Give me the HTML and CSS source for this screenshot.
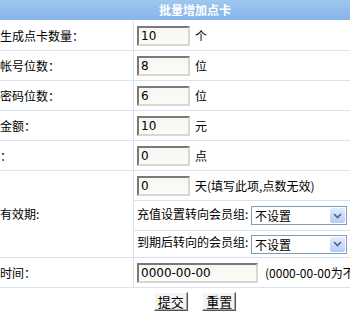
FILE: index.html
```html
<!DOCTYPE html>
<html lang="zh-CN">
<head>
    <meta charset="UTF-8">
    <title>批量增加点卡</title>
    <link rel="stylesheet" href="styles.css">
</head>
<body>

    <table class="form-table">
        <tr>
            <th colspan="2" class="title">批量增加点卡</th>
        </tr>
        <tr>
            <td class="label">生成点卡数量：</td>
            <td class="field"><input type="text" class="txt" value="10"><span class="unit">个</span></td>
        </tr>
        <tr>
            <td class="label">帐号位数：</td>
            <td class="field"><input type="text" class="txt" value="8"><span class="unit">位</span></td>
        </tr>
        <tr>
            <td class="label">密码位数：</td>
            <td class="field"><input type="text" class="txt" value="6"><span class="unit">位</span></td>
        </tr>
        <tr>
            <td class="label">金额：</td>
            <td class="field"><input type="text" class="txt" value="10"><span class="unit">元</span></td>
        </tr>
        <tr>
            <td class="label">：</td>
            <td class="field"><input type="text" class="txt" value="0"><span class="unit">点</span></td>
        </tr>
        <tr>
            <td class="label">有效期:</td>
            <td class="nested">
                <table class="inner">
                    <tr>
                        <td><input type="text" class="txt" value="0"><span class="unit">天(填写此项,点数无效)</span></td>
                    </tr>
                    <tr>
                        <td>充值设置转向会员组:
                            <span class="select-box">
                                <select><option>不设置</option></select>
                                <span class="arrow"><svg width="9" height="6" viewBox="0 0 9 6"><path d="M1 1 L4.5 4.5 L8 1" fill="none" stroke="#4d6185" stroke-width="1.6"/></svg></span>
                            </span>
                        </td>
                    </tr>
                    <tr>
                        <td>到期后转向的会员组:
                            <span class="select-box">
                                <select><option>不设置</option></select>
                                <span class="arrow"><svg width="9" height="6" viewBox="0 0 9 6"><path d="M1 1 L4.5 4.5 L8 1" fill="none" stroke="#4d6185" stroke-width="1.6"/></svg></span>
                            </span>
                        </td>
                    </tr>
                </table>
            </td>
        </tr>
        <tr>
            <td class="label">时间：</td>
            <td class="field"><input type="text" class="txt date" value="0000-00-00"><span class="note">(0000-00-00为不限制)</span></td>
        </tr>
        <tr>
            <td colspan="2" class="actions">
                <button type="submit">提交</button>
                <button type="reset">重置</button>
            </td>
        </tr>
    </table>

</body>
</html>
```

FILE: styles.css
```css
body {
    margin: 0;
    font-family: "Noto Sans CJK SC", sans-serif;
    font-size: 12px;
    line-height: 16px;
    color: #000;
    background-color: #fff;
    overflow: hidden;
}
.form-table {
    width: 390px;
    border-collapse: collapse;
}
.form-table td {
    padding: 0;
    border-bottom: 1px solid #d6e3f0;
}
.title {
    height: 20px;
    padding: 0;
    background: linear-gradient(#9fc6ef, #86b5e7);
    color: #fff;
    font-weight: bold;
    font-size: 12px;
    text-align: center;
    border-bottom: 1px solid #fff;
}
.label {
    width: 133px;
    height: 29px;
    border-right: 1px solid #d6e3f0;
    white-space: nowrap;
}
.field {
    height: 29px;
    padding-left: 3px !important;
    white-space: nowrap;
}
.txt {
    box-sizing: border-box;
    width: 53px;
    height: 20px;
    margin: 0;
    padding: 1px 2px;
    border: 2px solid;
    border-color: #7a7a7a #d8d8d0 #d8d8d0 #7a7a7a;
    background: linear-gradient(#f6f6f2, #fbfbf8);
    font-family: "DejaVu Sans", sans-serif;
    font-size: 12px;
    vertical-align: middle;
}
.txt.date {
    width: 121px;
}
.unit {
    margin-left: 5px;
    vertical-align: middle;
}
.note {
    margin-left: 7px;
    vertical-align: middle;
}
.nested {
    padding: 0;
}
.inner {
    width: 100%;
    border-collapse: collapse;
}
.inner td {
    height: 29px;
    padding-left: 3px !important;
    white-space: nowrap;
}
.inner tr:last-child td {
    border-bottom: none;
    height: 26px;
}
.select-box {
    position: relative;
    display: inline-block;
    vertical-align: middle;
}
.select-box select {
    appearance: none;
    -webkit-appearance: none;
    box-sizing: border-box;
    width: 96px;
    height: 19px;
    margin: 0;
    padding: 0 0 0 3px;
    border: 1px solid #7f9db9;
    background: #fff;
    font-family: "Noto Sans CJK SC", sans-serif;
    font-size: 12px;
    display: block;
}
.arrow {
    position: absolute;
    right: 2px;
    top: 2px;
    width: 15px;
    height: 15px;
    border-radius: 2px;
    background: linear-gradient(#e3ecfd, #b6cbf4);
    display: flex;
    align-items: center;
    justify-content: center;
}
.actions {
    height: 26px;
    text-align: center;
    border-bottom: none !important;
}
.actions button {
    font-family: "Noto Sans CJK SC", sans-serif;
    font-size: 13px;
    line-height: 15px;
    padding: 1px 3px;
    margin: 0 6px;
    background-color: #f4f4f4;
    border: 1px solid;
    border-color: #fff #555 #555 #fff;
    box-shadow: inset -1px -1px 0 #aaa;
    cursor: pointer;
}
```
